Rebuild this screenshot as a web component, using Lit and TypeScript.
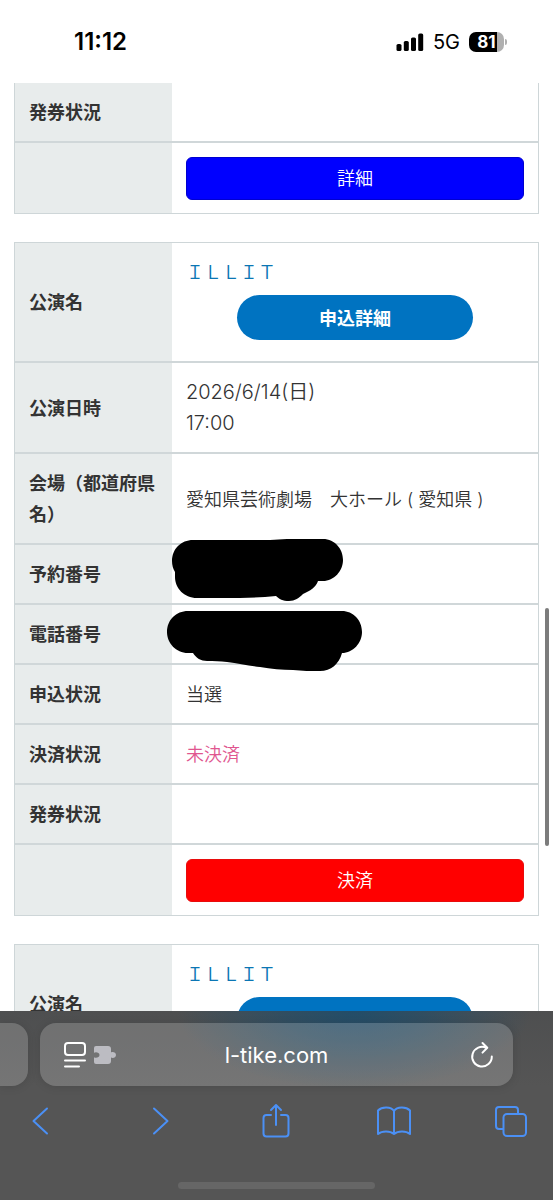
import { LitElement, html, css, svg, nothing } from "lit";
import { customElement, property } from "lit/decorators.js";

type Kind = "title" | "date" | "text" | "unpaid" | "hidden-short" | "hidden-long" | "detail" | "pay";

interface Row {
  label: string;
  kind: Kind;
  value?: string;
}

const previousEntry: Row[] = [
  { label: "発券状況", kind: "text" },
  { label: "", kind: "detail", value: "詳細" },
];

const currentEntry: Row[] = [
  { label: "公演名", kind: "title", value: "ＩＬＬＩＴ" },
  { label: "公演日時", kind: "date", value: "2026/6/14(日) 17:00" },
  { label: "会場（都道府県名）", kind: "text", value: "愛知県芸術劇場　大ホール ( 愛知県 )" },
  { label: "予約番号", kind: "hidden-short" },
  { label: "電話番号", kind: "hidden-long" },
  { label: "申込状況", kind: "text", value: "当選" },
  { label: "決済状況", kind: "unpaid", value: "未決済" },
  { label: "発券状況", kind: "text" },
  { label: "", kind: "pay", value: "決済" },
];

const nextEntry: Row[] = [{ label: "公演名", kind: "title", value: "ＩＬＬＩＴ" }];

@customElement("status-bar")
export class StatusBar extends LitElement {
  static styles = css`
    :host {
      display: flex;
      justify-content: space-between;
      align-items: center;
      height: 83px;
      padding: 0 46px 0 74px;
      box-sizing: border-box;
      background: #fff;
      color: #000;
      font-family: Inter, sans-serif;
    }
    .time {
      font-size: 24px;
      font-weight: 600;
    }
    .right {
      display: flex;
      align-items: center;
      gap: 9px;
    }
    .net {
      font-size: 20px;
    }
    .battery {
      display: flex;
      align-items: center;
      gap: 1px;
    }
    .cell {
      width: 35px;
      height: 20px;
      border-radius: 7px;
      background: linear-gradient(90deg, #000 81%, #b0b0b0 81%);
      color: #fff;
      font-size: 17px;
      font-weight: 700;
      line-height: 20px;
      text-align: center;
    }
    .nub {
      width: 2px;
      height: 6px;
      border-radius: 0 2px 2px 0;
      background: #b0b0b0;
    }
    svg {
      display: block;
    }
  `;

  render() {
    return html`
      <span class="time">11:12</span>
      <div class="right">
        <svg width="28" height="18" viewBox="0 0 28 18" aria-hidden="true">
          <rect x="0.5" y="11" width="5" height="7" rx="1.6" />
          <rect x="7.8" y="8" width="5" height="10" rx="1.6" />
          <rect x="15" y="4.4" width="5" height="13.6" rx="1.6" />
          <rect x="22.2" y="0.5" width="5" height="17.5" rx="1.6" />
        </svg>
        <span class="net">5G</span>
        <div class="battery"><span class="cell">81</span><span class="nub"></span></div>
      </div>
    `;
  }
}

@customElement("entry-table")
export class EntryTable extends LitElement {
  @property({ attribute: false }) rows: Row[] = [];
  @property({ type: Boolean, reflect: true }) continued = false;

  static styles = css`
    :host {
      display: block;
    }
    .entry {
      width: 100%;
      box-sizing: border-box;
      table-layout: fixed;
      border: 1px solid #ced6d8;
      border-spacing: 0;
      font-size: 18px;
      line-height: 31px;
      color: #333;
    }
    :host([continued]) .entry {
      border-top: 0;
    }
    .label,
    .value {
      padding: 14px 14px 13px;
      border-bottom: 2px solid #d0d7d9;
      text-align: left;
      vertical-align: middle;
    }
    .label {
      width: 30%;
      box-sizing: border-box;
      background: #e8ecec;
      font-weight: 700;
    }
    .value {
      position: relative;
      font-weight: 350;
    }
    .row:last-child .label,
    .row:last-child .value {
      border-bottom: 0;
    }
    .link {
      color: #0b76b4;
      text-decoration: none;
    }
    .pill {
      display: block;
      width: 70%;
      height: 45px;
      margin: 7px auto 8px;
      border: 0;
      border-radius: 23px;
      background: #0073c1;
      color: #fff;
      font: 700 18px/31px Inter, "Noto Sans CJK JP", sans-serif;
      padding: 2px 0 0;
    }
    .date {
      display: block;
      width: 150px;
      font-size: 20px;
    }
    .unpaid {
      color: #e0568f;
    }
    .wide {
      display: block;
      width: 100%;
      height: 43px;
      padding: 0;
      border: 1px solid #0000d0;
      border-radius: 6px;
      background: #00f;
      color: #fff;
      font: 350 18px/41px Inter, "Noto Sans CJK JP", sans-serif;
    }
    .pay {
      border-color: #e80c0c;
      background: #f00;
    }
    .mask {
      position: absolute;
      z-index: 1;
      left: -1px;
      top: -7px;
    }
    .mask-long {
      left: -6px;
      top: 4px;
    }
  `;

  private cell(row: Row) {
    switch (row.kind) {
      case "title":
        return html`<a class="link" href="#">${row.value}</a>
          <button class="pill" type="button">申込詳細</button>`;
      case "date":
        return html`<time class="date">${row.value}</time>`;
      case "unpaid":
        return html`<span class="unpaid">${row.value}</span>`;
      case "detail":
        return html`<button class="wide" type="button">${row.value}</button>`;
      case "pay":
        return html`<button class="wide pay" type="button">${row.value}</button>`;
      case "hidden-short":
        return html`<svg class="mask" width="173" height="64" viewBox="0 0 173 64" aria-hidden="true">
          <path d="M1 23C1 11 10 2 22 2H99C105 2 110 1 116 1H152C164 1 172 11 172 22S163 43 152 43H147C145 49 139 53 132 56C128 60 124 63 118 63C112 63 108 61 105 58C93 59 81 60 69 60H26C13 60 4 50 4 39V34C2 31 1 27 1 23Z" />
        </svg>`;
      case "hidden-long":
        return html`<svg class="mask mask-long" width="197" height="63" viewBox="0 0 197 63" aria-hidden="true">
          <path d="M1 23C1 11 10 2 22 2H176C187 2 196 11 196 23C196 34 187 44 176 44C173 55 165 62 154 62C145 62 136 62 127 61C116 61 105 60 94 58C83 57 72 54 61 53C54 52 48 52 41 52C35 52 30 49 27 44H22C10 44 1 34 1 23Z" />
        </svg>`;
      default:
        return row.value ?? nothing;
    }
  }

  render() {
    return html`
      <table class="entry">
        <tbody>
          ${this.rows.map(
            (row) => html`<tr class="row">
              <th class="label" scope="row">${row.label}</th>
              <td class="value">${this.cell(row)}</td>
            </tr>`
          )}
        </tbody>
      </table>
    `;
  }
}

@customElement("browser-bar")
export class BrowserBar extends LitElement {
  static styles = css`
    :host {
      display: block;
      height: 189px;
      box-sizing: border-box;
      padding-top: 12px;
      background:
        radial-gradient(ellipse 32% 78px at 64% 0, rgba(20, 76, 112, 0.75), rgba(20, 76, 112, 0.5) 40%, rgba(20, 76, 112, 0) 100%),
        linear-gradient(#4e4f50, #555 40%);
      font-family: Inter, sans-serif;
    }
    .tabs {
      display: flex;
      gap: 12px;
      padding-right: 40px;
    }
    .stub,
    .address {
      height: 63px;
      background: rgba(255, 255, 255, 0.19);
      box-shadow: 0 1px 10px rgba(0, 0, 0, 0.12);
    }
    .stub {
      width: 28px;
      border-radius: 0 16px 16px 0;
    }
    .address {
      flex: 1;
      min-width: 0;
      display: grid;
      grid-template-columns: 60px 1fr 60px;
      align-items: center;
      padding: 0 16px;
      box-sizing: border-box;
      border-radius: 16px;
    }
    .url {
      min-width: 0;
      border: 0;
      padding: 0;
      background: none;
      color: #fff;
      font: 400 22px/30px Inter, sans-serif;
      text-align: center;
      outline: 0;
    }
    .icon {
      display: flex;
      align-items: center;
      justify-content: center;
      height: 44px;
      padding: 0;
      border: 0;
      background: none;
      color: #fff;
    }
    .page {
      width: 68px;
    }
    .reload {
      width: 30px;
      justify-self: end;
    }
    .tools {
      display: flex;
      justify-content: space-between;
      padding: 13px 20px 0 19px;
    }
    .tool {
      width: 44px;
      color: #4b90f5;
    }
    .home {
      width: 197px;
      height: 7px;
      margin: 39px auto 0;
      border-radius: 4px;
      background: #666;
    }
    svg {
      display: block;
      fill: none;
      stroke: currentColor;
      stroke-width: 2;
      stroke-linecap: round;
      stroke-linejoin: round;
    }
  `;

  private tools = [
    { name: "戻る", icon: svg`<path d="M25 6.500L11.500 19L25 31.500" />` },
    { name: "進む", icon: svg`<path d="M14 6.500L27.500 19L14 31.500" />` },
    {
      name: "共有",
      icon: svg`<path d="M14 13H9.500Q6.500 13 6.500 16V31.500Q6.500 34.500 9.500 34.500H28.500Q31.500 34.500 31.500 31.500V16Q31.500 13 28.500 13H24M19 23V3.500M14 8L19 3L24 8" />`,
    },
    {
      name: "ブックマーク",
      icon: svg`<path d="M19 9C16 4.500 7 4.500 3 8.500V32C7 28.500 15 28.500 19 32C23 28.500 31 28.500 35 32V8.500C31 4.500 22 4.500 19 9V32" />`,
    },
    {
      name: "タブ",
      icon: svg`<path d="M11 27H7Q4 27 4 24V8Q4 5 7 5H23Q26 5 26 8V11" /><rect x="11.500" y="12" width="22.500" height="22" rx="3.500" />`,
    },
  ];

  render() {
    return html`
      <div class="tabs">
        <div class="stub"></div>
        <div class="address">
          <button class="icon page" type="button" aria-label="ページ設定">
            <svg width="52" height="26" viewBox="0 0 52 26">
              <rect x="1" y="1" width="20" height="12" rx="3" />
              <path d="M1 18.500H21M1 24.500H15" />
              <path
                d="M32 4H44Q47 4 47 7V10.500C49 9.500 52 10.500 52 13S49 16.500 47 15.500V19Q47 22 44 22H32Q30 22 30 20V15.300C32 16.500 35.500 15.500 35.500 13S32 9.500 30 10.700V6Q30 4 32 4Z"
                fill="#bcbcc2"
                stroke="none"
              />
            </svg>
          </button>
          <input class="url" type="text" aria-label="アドレス" .value=${"l-tike.com"} />
          <button class="icon reload" type="button" aria-label="再読み込み">
            <svg width="24" height="28" viewBox="0 0 24 28">
              <path d="M21.800 15.500A9.800 9.800 0 1 1 16.500 7M12.500 2L17.300 6.800L12.500 11.600" />
            </svg>
          </button>
        </div>
      </div>
      <div class="tools">
        ${this.tools.map(
          (tool) => html`<button class="icon tool" type="button" aria-label=${tool.name}>
            <svg width="38" height="38" viewBox="0 0 38 38">${tool.icon}</svg>
          </button>`
        )}
      </div>
      <div class="home"></div>
    `;
  }
}

@customElement("app-root")
export class AppRoot extends LitElement {
  static styles = css`
    :host {
      display: flex;
      flex-direction: column;
      position: relative;
      height: 100vh;
      overflow: hidden;
      background: #fff;
      font-family: Inter, "Noto Sans CJK JP", sans-serif;
    }
    .status {
      flex: none;
    }
    .content {
      flex: 1;
      min-height: 0;
      display: flex;
      flex-direction: column;
      gap: 28px;
      padding: 0 14px;
      overflow: hidden;
    }
    .entry {
      flex: none;
    }
    .thumb {
      position: absolute;
      right: 4px;
      top: 608px;
      width: 4px;
      height: 238px;
      border-radius: 2px;
      background: #7c7c7c;
    }
    .browser {
      position: absolute;
      left: 0;
      right: 0;
      bottom: 0;
      z-index: 2;
    }
  `;

  render() {
    return html`
      <status-bar class="status"></status-bar>
      <main class="content">
        <entry-table class="entry" continued .rows=${previousEntry}></entry-table>
        <entry-table class="entry" .rows=${currentEntry}></entry-table>
        <entry-table class="entry" .rows=${nextEntry}></entry-table>
      </main>
      <div class="thumb"></div>
      <browser-bar class="browser"></browser-bar>
    `;
  }
}
